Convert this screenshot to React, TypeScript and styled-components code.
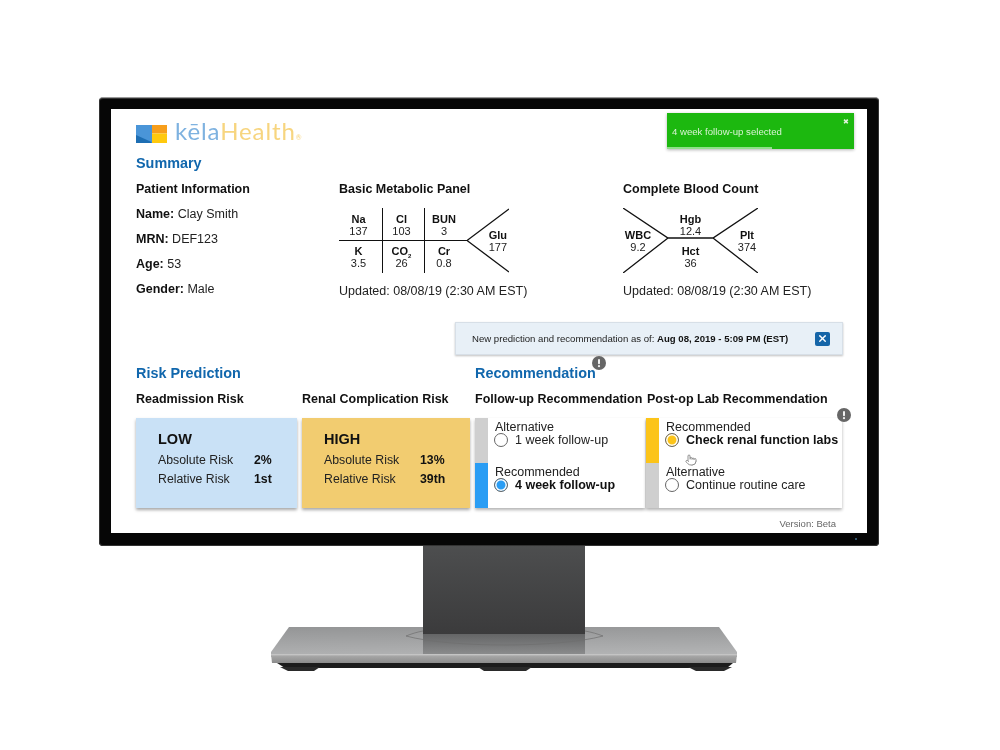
import styled, { createGlobalStyle } from 'styled-components';
import { Pointer, X } from 'lucide-react';

const GlobalStyle = createGlobalStyle`
  html, body {
    margin: 0;
    background: #fff;
    overflow: hidden;
  }
  * {
    box-sizing: border-box;
  }
`;

const lines = [
  { label: 'Absolute Risk', id: 'abs' },
  { label: 'Relative Risk', id: 'rel' },
];

const risks = [
  { level: 'LOW', tone: '#c9e1f6', abs: '2%', rel: '1st', gap: 5 },
  { level: 'HIGH', tone: '#f2cc70', abs: '13%', rel: '39th', gap: 5 },
];

const Info = ({ className }: { className?: string }) => (
  <svg className={className} viewBox="0 0 14 14" width="14" height="14">
    <circle cx="7" cy="7" r="7" fill="#666" />
    <rect x="6" y="3" width="2" height="5.2" rx="1" fill="#f2f2f2" />
    <circle cx="7" cy="10.2" r="1.1" fill="#f2f2f2" />
  </svg>
);

const Logo = () => (
  <LogoRow>
    <svg width="31" height="18" viewBox="0 0 31 18">
      <rect width="16" height="18" fill="#4a95d8" />
      <polygon points="0,10 15.5,17 15.5,18 0,18" fill="#1d6eb3" />
      <rect x="16" width="15" height="8.5" fill="#f79e1b" />
      <rect x="16" y="8.5" width="15" height="9.5" fill="#ffc90e" />
    </svg>
    <LogoText>
      <LogoKela>kēla</LogoKela>
      <LogoHealth>Health</LogoHealth>
      <LogoMark>®</LogoMark>
    </LogoText>
  </LogoRow>
);

const MetabolicPanel = () => (
  <Fishbone>
    <PanelGrid>
      <PanelCell $col={1}><b>Na</b>137</PanelCell>
      <PanelCell $col={2}><b>Cl</b>103</PanelCell>
      <PanelCell $col={3}><b>BUN</b>3</PanelCell>
      <PanelCell $col={1} $lower><b>K</b>3.5</PanelCell>
      <PanelCell $col={2} $lower><b>CO<Sub>2</Sub></b>26</PanelCell>
      <PanelCell $col={3} $lower><b>Cr</b>0.8</PanelCell>
    </PanelGrid>
    <Wedge>
      <BoneLines viewBox="0 0 42 65" width="42" height="65">
        <path d="M42 1 L0 32.5 L42 64" fill="none" stroke="#111" strokeWidth="1.3" />
      </BoneLines>
      <WedgeLabel><b>Glu</b>177</WedgeLabel>
    </Wedge>
  </Fishbone>
);

const BloodCount = () => (
  <CountGrid>
    <BoneLines viewBox="0 0 135 65" width="135" height="65">
      <path
        d="M0 0 L45 30 L90 30 L135 0 M0 65 L45 30 M90 30 L135 65"
        fill="none"
        stroke="#111"
        strokeWidth="1.3"
      />
    </BoneLines>
    <CountSide><b>WBC</b>9.2</CountSide>
    <CountMiddle>
      <CountCell><b>Hgb</b>12.4</CountCell>
      <CountCell><b>Hct</b>36</CountCell>
    </CountMiddle>
    <CountSide $right><b>Plt</b>374</CountSide>
  </CountGrid>
);

const Choice = ({
  tag,
  text,
  tone,
  picked,
}: {
  tag: string;
  text: string;
  tone: string;
  picked?: boolean;
}) => (
  <ChoiceRow>
    <ChoiceBar $tone={tone} />
    <ChoiceBody>
      <ChoiceTag>{tag}</ChoiceTag>
      <ChoiceLine $picked={picked}>
        <Radio $tone={picked ? tone : undefined} />
        {text}
      </ChoiceLine>
    </ChoiceBody>
  </ChoiceRow>
);

export default function App() {
  return (
    <Page>
      <GlobalStyle />
      <Bezel>
        <Screen>
          <Toast>
            4 week follow-up selected
            <ToastClose>✖</ToastClose>
            <ToastProgress />
          </Toast>
          <Logo />
          <SectionTitle $top={10}>Summary</SectionTitle>
          <SummaryGrid>
            <div>
              <ColumnTitle>Patient Information</ColumnTitle>
              <PatientList>
                <PatientRow><b>Name:</b> Clay Smith</PatientRow>
                <PatientRow><b>MRN:</b> DEF123</PatientRow>
                <PatientRow><b>Age:</b> 53</PatientRow>
                <PatientRow><b>Gender:</b> Male</PatientRow>
              </PatientList>
            </div>
            <div>
              <ColumnTitle>Basic Metabolic Panel</ColumnTitle>
              <MetabolicPanel />
              <Updated>Updated: 08/08/19 (2:30 AM EST)</Updated>
            </div>
            <div>
              <ColumnTitle>Complete Blood Count</ColumnTitle>
              <BloodCount />
              <Updated>Updated: 08/08/19 (2:30 AM EST)</Updated>
            </div>
          </SummaryGrid>
          <Banner>
            <BannerText>
              New prediction and recommendation as of: <b>Aug 08, 2019 - 5:09 PM (EST)</b>
            </BannerText>
            <BannerClose>
              <X size={11} color="#fff" strokeWidth={3} />
            </BannerClose>
          </Banner>
          <BottomGrid>
            <BottomHeading>
              <SectionTitle>Risk Prediction</SectionTitle>
            </BottomHeading>
            <BottomHeading>
              <SectionTitle>
                Recommendation
                <TitleInfo />
              </SectionTitle>
            </BottomHeading>
            <ColumnTitle>Readmission Risk</ColumnTitle>
            <ColumnTitle>Renal Complication Risk</ColumnTitle>
            <ColumnTitle>Follow-up Recommendation</ColumnTitle>
            <ColumnTitle>Post-op Lab Recommendation</ColumnTitle>
            {risks.map(risk => (
              <RiskCard key={risk.level} $tone={risk.tone} $gap={risk.gap}>
                <RiskLevel>{risk.level}</RiskLevel>
                {lines.map(line => (
                  <RiskLine key={line.id}>
                    <span>{line.label}</span>
                    <b>{line.id === 'abs' ? risk.abs : risk.rel}</b>
                  </RiskLine>
                ))}
              </RiskCard>
            ))}
            <ChoiceCard $gap={2}>
              <Choice tag="Alternative" text="1 week follow-up" tone="#cfcfcf" />
              <Choice tag="Recommended" text="4 week follow-up" tone="#2a9df4" picked />
            </ChoiceCard>
            <ChoiceCard $gap={0} $pull={1}>
              <Choice tag="Recommended" text="Check renal function labs" tone="#fcc419" picked />
              <Choice tag="Alternative" text="Continue routine care" tone="#cfcfcf" />
              <CardInfo />
              <HandCursor>
                <Pointer size={12} color="#777" fill="#fff" strokeWidth={1.6} />
              </HandCursor>
            </ChoiceCard>
          </BottomGrid>
          <Version>Version: Beta</Version>
        </Screen>
        <CameraDot />
      </Bezel>
      <Stand width="470" height="126" viewBox="0 0 470 126">
        <defs>
          <linearGradient id="plate" x1="0" y1="0" x2="0.15" y2="1">
            <stop offset="0" stopColor="#949596" />
            <stop offset="1" stopColor="#b2b3b4" />
          </linearGradient>
          <linearGradient id="edge" x1="0" y1="0" x2="0" y2="1">
            <stop offset="0" stopColor="#cdcdcd" />
            <stop offset="0.25" stopColor="#a5a5a5" />
            <stop offset="1" stopColor="#8c8c8c" />
          </linearGradient>
          <linearGradient id="neck" x1="0" y1="0" x2="0" y2="1">
            <stop offset="0" stopColor="#4d4e4f" />
            <stop offset="1" stopColor="#3b3b3c" />
          </linearGradient>
          <linearGradient id="mirror" x1="0" y1="0" x2="0" y2="1">
            <stop offset="0" stopColor="#646566" />
            <stop offset="1" stopColor="#8a8b8c" />
          </linearGradient>
        </defs>
        <path d="M18 81 H448 L466 106 V111 H0 V106 Z" fill="url(#plate)" />
        <rect x="152" y="0" width="162" height="88" fill="url(#neck)" />
        <rect x="152" y="88" width="162" height="20" fill="url(#mirror)" />
        <path d="M135 90 C140 88 146 86 152 85 M314 85 C320 86 327 88 332 90 M135 90 C180 102 287 102 332 90" fill="none" stroke="#6f6f6f" strokeWidth="0.7" />
        <path d="M0 108 H466 L465 117 H1 Z" fill="url(#edge)" />
        <path d="M6 117 H462 L456 122 H14 Z" fill="#1c1c1c" />
        <path d="M9 121 H49 L43 125 H17 Z M207 121 H261 L255 125 H213 Z M417 121 H461 L453 125 H425 Z" fill="#2a2a2a" />
      </Stand>
    </Page>
  );
}

const Page = styled.div`
  width: 1000px;
  height: 750px;
  padding: 97px 0 0 99px;
  font-family: 'Liberation Sans', Arial, sans-serif;
  color: #111;
`;

const Bezel = styled.div`
  position: relative;
  width: 780px;
  height: 449px;
  padding: 12px 12px 13px;
  background: #060606;
  border-top: 1px solid #9a9a9a;
  border-radius: 4px;
  box-shadow: inset 0 0 0 1px #333;
`;

const CameraDot = styled.span`
  position: absolute;
  right: 22px;
  bottom: 6px;
  width: 2px;
  height: 2px;
  border-radius: 50%;
  background: #3f6f8f;
`;

const Screen = styled.div`
  position: relative;
  height: 424px;
  margin-top: -1px;
  padding: 15px 25px 0;
  display: flex;
  flex-direction: column;
  background: #fff;
  filter: blur(0.4px);
`;

const Toast = styled.div`
  position: absolute;
  top: 4px;
  right: 13px;
  width: 187px;
  height: 36px;
  padding-left: 5px;
  display: flex;
  align-items: center;
  background: #1cb80f;
  color: #d9f3d4;
  font-size: 9.6px;
  box-shadow: 0 1px 3px rgba(0, 0, 0, 0.3);
`;

const ToastClose = styled.span`
  position: absolute;
  top: 5px;
  right: 5px;
  font-size: 7px;
  color: #e4f5e1;
`;

const ToastProgress = styled.div`
  position: absolute;
  left: 0;
  bottom: 0;
  width: 105px;
  height: 2px;
  background: #8fe089;
`;

const LogoRow = styled.div`
  height: 20px;
  display: flex;
  align-items: center;
  gap: 8px;
`;

const LogoText = styled.div`
  font-family: Lato, 'Liberation Sans', sans-serif;
  font-weight: 400;
  font-size: 24px;
  line-height: 20px;
  letter-spacing: 0.9px;
  white-space: nowrap;
`;

const LogoKela = styled.span`
  color: #7eb2e0;
`;

const LogoHealth = styled.span`
  color: #f7d57f;
`;

const LogoMark = styled.span`
  color: #f7d57f;
  font-size: 7px;
  letter-spacing: 0;
`;

const SectionTitle = styled.div<{ $top?: number }>`
  position: relative;
  width: fit-content;
  margin-top: ${props => props.$top ?? 0}px;
  font-size: 14.4px;
  line-height: 18px;
  font-weight: 700;
  color: #1167ad;
  white-space: nowrap;
`;

const TitleInfo = styled(Info)`
  position: absolute;
  top: -8px;
  right: -10px;
`;

const SummaryGrid = styled.div`
  margin-top: 8px;
  display: grid;
  grid-template-columns: 203px 284px 1fr;
  height: 122px;
`;

const ColumnTitle = styled.div`
  font-size: 12.5px;
  line-height: 18px;
  font-weight: 700;
  white-space: nowrap;
`;

const PatientList = styled.div`
  margin-top: 4px;
`;

const PatientRow = styled.div`
  font-size: 12.5px;
  line-height: 25px;
  color: #222;

  b {
    color: #111;
  }
`;

const Fishbone = styled.div`
  margin-top: 10px;
  display: flex;
  height: 65px;
`;

const PanelGrid = styled.div`
  width: 128px;
  display: grid;
  grid-template-columns: 43px 42px 43px;
  grid-template-rows: 32px 33px;
`;

const PanelCell = styled.div<{ $col: number; $lower?: boolean }>`
  display: flex;
  flex-direction: column;
  align-items: center;
  justify-content: ${props => (props.$lower ? 'flex-start' : 'flex-end')};
  padding: ${props => (props.$lower ? '4px 4px 0 0' : '0 4px 3px 0')};
  border-left: ${props => (props.$col > 1 ? '1.3px solid #111' : 'none')};
  border-top: ${props => (props.$lower ? '1.3px solid #111' : 'none')};
  font-size: 11px;
  line-height: 12px;
  color: #222;

  b {
    color: #111;
  }
`;

const Sub = styled.sub`
  font-size: 6px;
  line-height: 0;
`;

const Wedge = styled.div`
  position: relative;
  width: 42px;
  display: flex;
  align-items: center;
  justify-content: flex-end;
`;

const BoneLines = styled.svg`
  position: absolute;
  top: 0;
  left: 0;
`;

const WedgeLabel = styled.div`
  position: relative;
  margin-right: 2px;
  padding-top: 1px;
  display: flex;
  flex-direction: column;
  align-items: center;
  font-size: 11px;
  line-height: 12px;
  color: #222;

  b {
    color: #111;
  }
`;

const CountGrid = styled.div`
  position: relative;
  margin-top: 10px;
  width: 135px;
  height: 65px;
  display: grid;
  grid-template-columns: 30px 75px 30px;
  font-size: 11px;
  line-height: 12px;
  color: #222;

  b {
    color: #111;
  }
`;

const CountSide = styled.div<{ $right?: boolean }>`
  position: relative;
  display: flex;
  flex-direction: column;
  align-items: center;
  justify-content: center;
  padding: ${props => (props.$right ? '1px 0 0 8px' : '1px 0 0')};
`;

const CountMiddle = styled.div`
  position: relative;
  display: flex;
  flex-direction: column;
  justify-content: center;
  gap: 8px;
`;

const CountCell = styled.div`
  display: flex;
  flex-direction: column;
  align-items: center;
`;

const Updated = styled.div`
  margin-top: 9px;
  font-size: 12.5px;
  line-height: 18px;
  color: #222;
  white-space: nowrap;
`;

const Banner = styled.div`
  margin: 20px -1px 0 0;
  align-self: flex-end;
  width: 388px;
  height: 33px;
  padding: 0 12px 0 16px;
  display: flex;
  align-items: center;
  justify-content: space-between;
  background: #e8f0f7;
  border: 1px solid #d7dfe7;
  box-shadow: 0 1px 2px rgba(0, 0, 0, 0.25);
`;

const BannerText = styled.div`
  font-size: 9.6px;
  color: #222;
  white-space: nowrap;

  b {
    color: #111;
  }
`;

const BannerClose = styled.div`
  width: 15px;
  height: 14px;
  display: flex;
  align-items: center;
  justify-content: center;
  background: #1565a8;
  border-radius: 2px;
`;

const BottomGrid = styled.div`
  margin-top: 9px;
  display: grid;
  grid-template-columns: 166px 173px 172px 195px;
  grid-template-rows: 26px 18px 100px;

  & > :nth-child(n + 7) {
    margin-top: 10px;
  }
`;

const BottomHeading = styled.div`
  grid-column: span 2;
`;

const RiskCard = styled.div<{ $tone: string; $gap: number }>`
  margin-right: ${props => props.$gap}px;
  padding: 13px 0 0 22px;
  background: ${props => props.$tone};
  box-shadow: 0 2px 3px rgba(0, 0, 0, 0.35);
`;

const RiskLevel = styled.div`
  font-size: 14.5px;
  line-height: 17px;
  font-weight: 700;
  margin-bottom: 3px;
`;

const RiskLine = styled.div`
  display: grid;
  grid-template-columns: 96px 1fr;
  font-size: 12.3px;
  line-height: 19px;
  color: #222;

  b {
    color: #111;
  }
`;

const ChoiceCard = styled.div<{ $gap: number; $pull?: number }>`
  position: relative;
  margin-right: ${props => props.$gap}px;
  margin-left: ${props => -(props.$pull ?? 0)}px;
  background: #fff;
  box-shadow: 0 2px 3px rgba(0, 0, 0, 0.3);
`;

const ChoiceRow = styled.div`
  height: 45px;
  display: flex;
`;

const ChoiceBar = styled.div<{ $tone: string }>`
  width: 13px;
  background: ${props => props.$tone};
`;

const ChoiceBody = styled.div`
  padding: 3px 0 0 7px;
`;

const ChoiceTag = styled.div`
  font-size: 12.5px;
  line-height: 13px;
  color: #222;
`;

const ChoiceLine = styled.div<{ $picked?: boolean }>`
  margin-top: -1px;
  display: flex;
  align-items: center;
  gap: 7px;
  font-size: 12.5px;
  line-height: 13px;
  font-weight: ${props => (props.$picked ? 700 : 400)};
  color: ${props => (props.$picked ? '#111' : '#222')};
  white-space: nowrap;
`;

const Radio = styled.span<{ $tone?: string }>`
  flex: none;
  width: 14px;
  height: 14px;
  margin-left: -1px;
  border-radius: 50%;
  border: 1px solid #666;
  background: ${props => props.$tone ?? '#fff'};
  box-shadow: ${props => (props.$tone ? 'inset 0 0 0 1.5px #fff' : 'none')};
`;

const CardInfo = styled(Info)`
  position: absolute;
  top: -10px;
  right: -9px;
`;

const HandCursor = styled.div`
  position: absolute;
  top: 36px;
  left: 39px;
  line-height: 0;
`;

const Version = styled.div`
  margin-top: 8px;
  padding-right: 6px;
  text-align: right;
  font-size: 9.5px;
  line-height: 16px;
  color: #666;
`;

const Stand = styled.svg`
  display: block;
  margin-left: 172px;
`;
